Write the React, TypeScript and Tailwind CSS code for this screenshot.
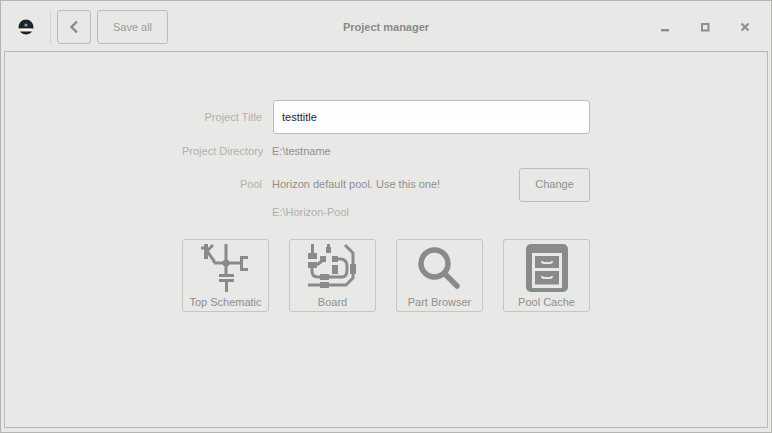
const font = { fontFamily: '"Liberation Sans", Tahoma, sans-serif' };

function Logo() {
  return (
    <svg width="16" height="16" viewBox="0 0 16 16">
      <circle cx="8" cy="8" r="7.5" fill="#222" />
      <rect x="0" y="9.5" width="16" height="3" fill="#e8e8e6" />
      <path d="M2.6 10.5 H13.4" stroke="#fff" strokeWidth="1.5" />
      <circle cx="8" cy="6" r="1.6" fill="#5aa9e0" />
    </svg>
  );
}

function BackIcon() {
  return (
    <svg width="12" height="14" viewBox="0 0 12 14" fill="none">
      <path d="M9 1.5 L3.5 7 L9 12.5" stroke="#888b8a" strokeWidth="2.4" />
    </svg>
  );
}

function WindowControls() {
  return (
    <div className="flex items-center gap-[30px] pr-[21px]">
      <svg width="10" height="10" viewBox="0 0 10 10">
        <rect x="1" y="7" width="8" height="2.4" fill="#8f8f8f" />
      </svg>
      <svg width="10" height="10" viewBox="0 0 10 10" fill="none">
        <rect x="2" y="2" width="6.5" height="6.5" stroke="#8f8f8f" strokeWidth="2" />
      </svg>
      <svg width="10" height="10" viewBox="0 0 10 10" fill="none">
        <path d="M1.5 1.5 L8.5 8.5 M8.5 1.5 L1.5 8.5" stroke="#8f8f8f" strokeWidth="2.2" />
      </svg>
    </div>
  );
}

// icon drawings use screenshot coords through the viewBox, easier to line up
function SchematicIcon() {
  return (
    <svg width="56" height="50" viewBox="198 241 56 50" fill="none" stroke="#888b8a" strokeWidth="3">
      <path d="M226 242 V273" />
      <path d="M214 261 H241" />
      <circle cx="226" cy="261" r="3.5" fill="#888b8a" stroke="none" />
      <path d="M248 255.5 H241.5 V267.5 H248" />
      <path d="M219 273.5 H234 M219 278.5 H234 M226.5 278 V290" />
      <path d="M206 242 V257" strokeWidth="4" />
      <path d="M201 246 H206" />
      <path d="M213 243 L207 249 L214 259 V261" />
    </svg>
  );
}

function BoardIcon() {
  return (
    <svg width="56" height="50" viewBox="305 241 56 50" fill="none" stroke="#888b8a" strokeWidth="3">
      <path d="M312.5 242 V252 M328.5 242 V246" />
      <path d="M345 243 L353 251 V262 M353 272 V276 L346 283 H308" />
      <path d="M312 266 V269 Q312 275 318 275 H342 Q347 275 347 268 V264 Q347 257 340 257 H338" />
      <path d="M322 259 L317 263" />
      <g fill="#888b8a" stroke="none">
        <rect x="308" y="251" width="9" height="6" />
        <rect x="308" y="260" width="9" height="6" />
        <rect x="326" y="245" width="5" height="6" />
        <rect x="320" y="254" width="6" height="6" />
        <rect x="332" y="254" width="6" height="6" />
        <rect x="332" y="263" width="6" height="9" />
        <rect x="350" y="262" width="6" height="10" />
        <rect x="320" y="272" width="9" height="6" />
        <rect x="320" y="280" width="9" height="6" />
      </g>
    </svg>
  );
}

function SearchIcon() {
  return (
    <svg width="56" height="50" viewBox="412 241 56 50" fill="none" stroke="#888b8a" strokeWidth="5.5">
      <circle cx="434.5" cy="261.5" r="13.5" />
      <path d="M445 272 L457 284" strokeLinecap="round" />
    </svg>
  );
}

function CacheIcon() {
  return (
    <svg width="56" height="50" viewBox="518 241 56 50">
      <rect x="525" y="242" width="42" height="48" rx="5" fill="#888b8a" />
      <rect x="531" y="251" width="30" height="35" fill="#e8e8e6" />
      <rect x="534" y="254" width="24" height="12" fill="#888b8a" />
      <rect x="534" y="269" width="24" height="13.5" fill="#888b8a" />
      <path d="M541 259 Q541 261 543 261 H549 Q551 261 551 259" fill="none" stroke="#e8e8e6" strokeWidth="2" />
      <path d="M541 274 Q541 276 543 276 H549 Q551 276 551 274" fill="none" stroke="#e8e8e6" strokeWidth="2" />
    </svg>
  );
}

const tiles = [
  { label: "Top Schematic", icon: <SchematicIcon /> },
  { label: "Board", icon: <BoardIcon /> },
  { label: "Part Browser", icon: <SearchIcon /> },
  { label: "Pool Cache", icon: <CacheIcon /> },
];

export default function App() {
  return (
    <div
      className="w-[772px] h-[433px] flex flex-col bg-[#e8e8e6] border border-[#b4b4b1] text-[11px] overflow-hidden"
      style={font}
    >
      <header className="h-[50px] shrink-0 pt-[2px] flex items-center justify-between relative">
        <div className="flex items-center">
          <div className="w-[50px] h-[34px] flex items-center justify-center border-r border-[#d3d3cf] mr-[6px]">
            <Logo />
          </div>
          <button className="w-[34px] h-[34px] flex items-center justify-center rounded-[3px] border border-[#bdbcb6]">
            <BackIcon />
          </button>
          <button className="w-[71px] h-[34px] ml-[6px] rounded-[3px] border border-[#bdbcb6] text-[#9b9b9b]">
            Save all
          </button>
        </div>
        <div className="absolute left-0 right-0 text-center font-bold text-[#8a8a8a] pointer-events-none">
          Project manager
        </div>
        <WindowControls />
      </header>

      <main className="flex-1 mx-[3px] mb-[4px] border border-[#b9b8b2] flex flex-col items-center pt-[48px]">
        <div className="w-[408px]">
          <div className="grid grid-cols-[80px_1fr] gap-x-[10px] items-center">
            <div className="text-right text-[#b0b0ab]">Project Title</div>
            <input
              readOnly
              value="testtitle"
              className="h-[34px] ml-[1px] w-[317px] px-[8px] bg-[#fdfdfd] border border-[#bdbcb6] rounded-[3px] text-[#2a2a2a] outline-none"
            />
            <div className="text-right text-[#b0b0ab] mt-[9px] whitespace-nowrap">Project Directory</div>
            <div className="text-[#8f8f8f] mt-[9px]">E:\testname</div>
            <div className="text-right text-[#b0b0ab]  mt-[8px]">Pool</div>
            <div className="mt-[8px] flex items-center justify-between">
              <span className="text-[#8f8f8f]">Horizon default pool. Use this one!</span>
              <button className="w-[71px] h-[34px] rounded-[3px] border border-[#bdbcb6] text-[#8f8f8f]">
                Change
              </button>
            </div>
            <div />
            <div className="text-[#b0b0ab] mt-[2px]">E:\Horizon-Pool</div>
          </div>

          <div className="grid grid-cols-4 gap-x-[20px] mt-[19px]">
            {tiles.map((t) => (
              <button
                key={t.label}
                className="h-[73px] flex flex-col items-center rounded-[3px] border border-[#c6c5c0] text-[#8f8f8f]"
              >
                <span className="mt-[3px] h-[50px]">{t.icon}</span>
                <span className="mt-[1px]">{t.label}</span>
              </button>
            ))}
          </div>
        </div>
      </main>
    </div>
  );
}
